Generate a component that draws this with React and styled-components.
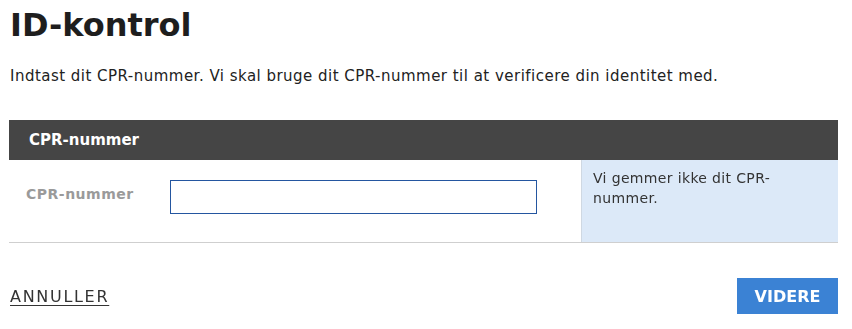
import styled, { createGlobalStyle } from "styled-components";

const GlobalStyle = createGlobalStyle`
  body {
    margin: 0;
    background: #fff;
    font-family: "DejaVu Sans", "Noto Sans", sans-serif;
    color: #222;
  }
`;

const Page = styled.main`
  padding: 0 14px 0 9px;
`;

const Title = styled.h1`
  margin: 0;
  padding: 5px 0 0 1px;
  font-size: 32px;
  font-weight: 700;
  color: #1e1e1e;
  line-height: 40px;
`;

const Intro = styled.p`
  margin: 21px 0 0 1px;
  font-size: 15px;
  letter-spacing: 0.48px;
  line-height: 20px;
  color: #222;
`;

const Panel = styled.section`
  margin-top: 34px;
  border-bottom: 1px solid #cfcfcf;
`;

const PanelHead = styled.div`
  height: 40px;
  display: flex;
  align-items: center;
  padding-left: 20px;
  background: #454545;
  color: #fff;
  font-weight: 700;
  font-size: 15px;
`;

const PanelBody = styled.div`
  display: flex;
  height: 82px;
`;

const Field = styled.div`
  flex: 1;
  display: flex;
  align-items: center;
  padding: 0 0 8px 17px;
`;

const Label = styled.label`
  width: 144px;
  margin-bottom: 6px;
  font-size: 14px;
  letter-spacing: 0.5px;
  font-weight: 700;
  color: #9a9a9a;
`;

const Input = styled.input`
  box-sizing: border-box;
  width: 367px;
  height: 34px;
  border: 1px solid #2456a0;
  padding: 0 8px;
  font: inherit;
  outline: none;
`;

const Note = styled.aside`
  box-sizing: border-box;
  width: 257px;
  padding: 8px 11px;
  background: #dce9f8;
  border-left: 1px solid #cfd8e2;
  font-size: 14px;
  letter-spacing: 0.35px;
  line-height: 20px;
  color: #333;
`;

const Actions = styled.div`
  display: flex;
  justify-content: space-between;
  align-items: center;
  margin-top: 35px;
`;

const CancelLink = styled.a`
  margin-left: 1px;
  font-size: 16px;
  letter-spacing: 1.7px;
  color: #333;
  text-decoration: underline;
  text-underline-offset: 3px;
`;

const PrimaryButton = styled.button`
  width: 101px;
  height: 36px;
  border: none;
  background: #3b82d4;
  color: #fff;
  font-family: inherit;
  font-size: 16px;
  font-weight: 700;
`;

const App = () => {
  return (
    <>
      <GlobalStyle />
      <Page>
        <Title>ID-kontrol</Title>
        <Intro>
          Indtast dit CPR-nummer. Vi skal bruge dit CPR-nummer til at verificere din identitet med.
        </Intro>

        <Panel>
          <PanelHead>CPR-nummer</PanelHead>
          <PanelBody>
            <Field>
              <Label htmlFor="cpr">CPR-nummer</Label>
              <Input id="cpr" type="text" autoFocus />
            </Field>
            <Note>Vi gemmer ikke dit CPR-nummer.</Note>
          </PanelBody>
        </Panel>

        <Actions>
          <CancelLink href="#">ANNULLER</CancelLink>
          <PrimaryButton>VIDERE</PrimaryButton>
        </Actions>
      </Page>
    </>
  );
};

export default App;
